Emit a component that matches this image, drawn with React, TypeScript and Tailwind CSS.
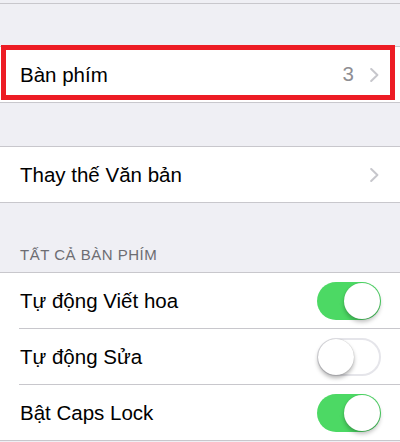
import React from "react";

const font = { fontFamily: '"Liberation Sans", Arial, sans-serif' };

function Chevron() {
  return (
    <svg width="9" height="14" viewBox="0 0 9 14" className="shrink-0">
      <path d="M1.2 1 L7.4 7 L1.2 13" fill="none" stroke="#c7c7cc" strokeWidth="2" strokeLinecap="round" strokeLinejoin="round" />
    </svg>
  );
}

function Toggle({ on }: { on: boolean }) {
  return on ? (
    <div className="w-[64px] h-[38px] rounded-full bg-[#4cd964] flex items-center justify-end pr-[1px] shrink-0">
      <div className="w-[36px] h-[36px] rounded-full bg-white shadow-[0_3px_4px_rgba(0,0,0,0.25),0_0_1px_rgba(0,0,0,0.2)]" />
    </div>
  ) : (
    <div className="w-[64px] h-[38px] rounded-full bg-white border-2 border-[#e5e5ea] flex items-center justify-start shrink-0">
      <div className="w-[36px] h-[36px] -ml-[1px] rounded-full bg-white shadow-[0_3px_4px_rgba(0,0,0,0.3),0_0_1px_rgba(0,0,0,0.3)]" />
    </div>
  );
}

function Line() {
  return <div className="h-px bg-[#c8c7cc]" />;
}

export default function App() {
  return (
    <div className="w-[400px] h-[442px] bg-[#efeff4] overflow-hidden text-black" style={font}>
      <div className="h-[3px]" />
      <Line />
      <div className="h-[42px]" />
      <div className="relative">
        <Line />
        <div className="h-[55px] bg-white flex items-center pl-[20px] pr-[21px]">
          <span className="text-[20.5px] leading-[55px] flex-1">Bàn phím</span>
          <span className="text-[20.5px] text-[#8e8e93] mr-[16px]">3</span>
          <Chevron />
        </div>
        <Line />
        <div className="absolute left-[1px] top-[-1px] w-[394px] h-[55px] border-[5px] border-[#ed1c24]" />
      </div>
      <div className="h-[43px]" />
      <Line />
      <div className="h-[55px] bg-white flex items-center pl-[20px] pr-[21px]">
        <span className="text-[20.5px] leading-[55px] flex-1">Thay thế Văn bản</span>
        <Chevron />
      </div>
      <Line />
      <div className="h-[69px] pt-[43px] pl-[20px]">
        <div className="text-[15px] leading-[18px] tracking-[0.5px] text-[#6d6d72]">TẤT CẢ BÀN PHÍM</div>
      </div>
      <Line />
      <div className="bg-white">
        <div className="h-[55px] flex items-center pl-[20px] pr-[19px]">
          <span className="text-[20.5px] leading-[55px] flex-1">Tự động Viết hoa</span>
          <Toggle on />
        </div>
        <div className="h-px bg-[#c8c7cc] ml-[19px]" />
        <div className="h-[55px] flex items-center pl-[20px] pr-[19px]">
          <span className="text-[20.5px] leading-[55px] flex-1">Tự động Sửa</span>
          <Toggle on={false} />
        </div>
        <div className="h-px bg-[#c8c7cc] ml-[19px]" />
        <div className="h-[55px] flex items-center pl-[20px] pr-[19px]">
          <span className="text-[20.5px] leading-[55px] flex-1">Bật Caps Lock</span>
          <Toggle on />
        </div>
      </div>
      <Line />
    </div>
  );
}
